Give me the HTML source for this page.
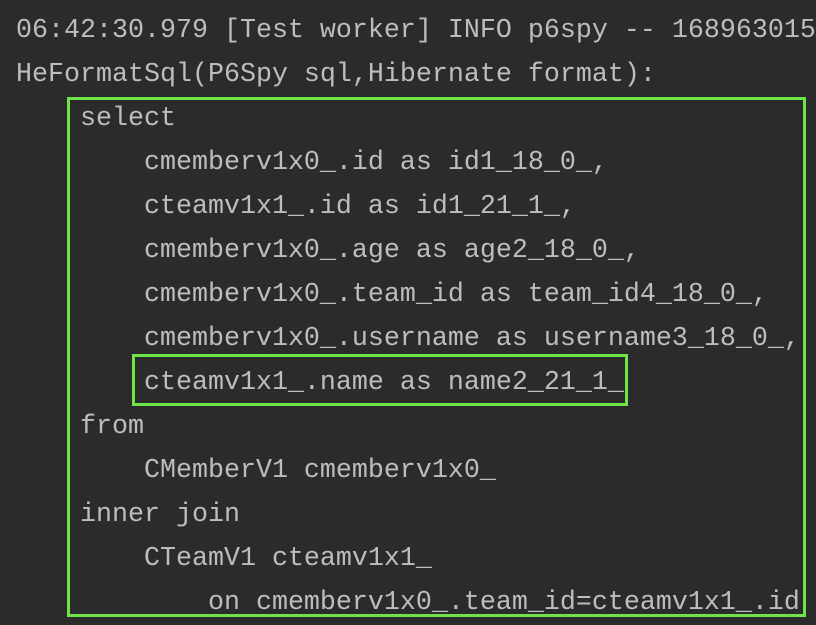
<!DOCTYPE html>
<html><head><style>
html,body{margin:0;padding:0;}
body{width:816px;height:624px;background:#2b2b2b;overflow:hidden;position:relative;
font-family:"Liberation Mono",monospace;font-size:26.67px;color:#bdbdbd;}
.l{position:absolute;left:16px;height:44px;line-height:44px;white-space:pre;}
.b{position:absolute;border:3px solid #6de449;box-sizing:border-box;}
</style></head><body>
<div class="l" style="top:9px">06:42:30.979 [Test worker] INFO p6spy -- 168963015</div>
<div class="l" style="top:53px">HeFormatSql(P6Spy sql,Hibernate format):</div>
<div class="l" style="top:97px">    select</div>
<div class="l" style="top:141px">        cmemberv1x0_.id as id1_18_0_,</div>
<div class="l" style="top:185px">        cteamv1x1_.id as id1_21_1_,</div>
<div class="l" style="top:229px">        cmemberv1x0_.age as age2_18_0_,</div>
<div class="l" style="top:273px">        cmemberv1x0_.team_id as team_id4_18_0_,</div>
<div class="l" style="top:317px">        cmemberv1x0_.username as username3_18_0_,</div>
<div class="l" style="top:361px">        cteamv1x1_.name as name2_21_1_</div>
<div class="l" style="top:405px">    from</div>
<div class="l" style="top:449px">        CMemberV1 cmemberv1x0_</div>
<div class="l" style="top:493px">    inner join</div>
<div class="l" style="top:537px">        CTeamV1 cteamv1x1_</div>
<div class="l" style="top:581px">            on cmemberv1x0_.team_id=cteamv1x1_.id</div>
<div class="b" style="left:67px;top:97px;width:739px;height:520px"></div>
<div class="b" style="left:132px;top:354px;width:496px;height:52px"></div>
</body></html>
